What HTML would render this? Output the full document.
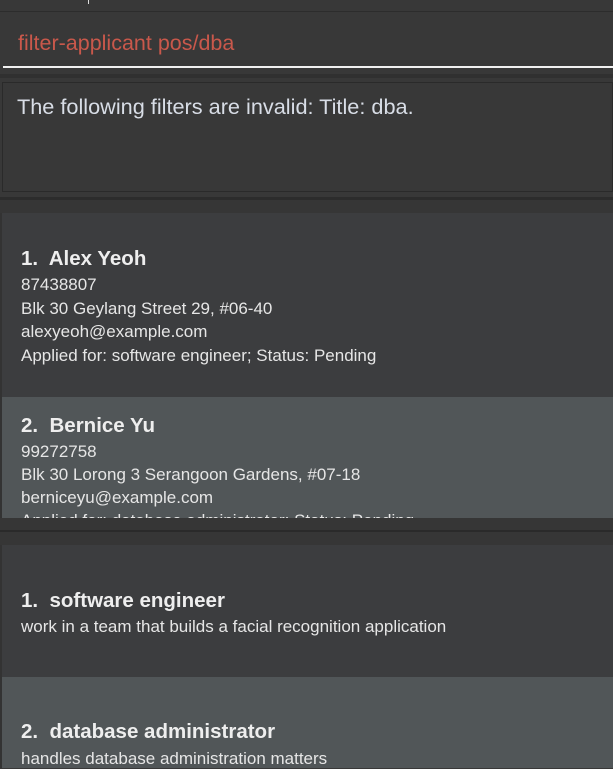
<!DOCTYPE html>
<html><head><style>
body{margin:0;width:613px;height:768px;overflow:hidden;background:#383838;font-family:"Liberation Sans",sans-serif;position:relative}
.a{position:absolute;left:0;width:613px}
.t{position:absolute;white-space:nowrap}
.n{font-size:20.5px;font-weight:bold;color:#eeeeee}
.d{font-size:17px;color:#e6e6e6}
</style></head><body>
<div class="a" style="top:0;height:11px;background:#383838"></div>
<div class="t" style="left:88px;top:0;width:1px;height:4px;background:#ddd"></div>
<div class="a" style="top:11px;height:1px;background:#2c2c2c"></div>
<div class="a" style="top:12px;height:62px;background:#383838"></div>
<div class="t" style="left:18px;top:31px;font-size:21.5px;color:#c9584b">filter-applicant pos/dba</div>
<div class="t" style="left:3px;top:66px;width:610px;height:2px;background:#f0f0f0"></div>
<div class="a" style="top:74px;height:4px;background:#303030"></div>
<div class="t" style="left:2px;top:82px;width:611px;height:110px;background:#383838;border:1px solid #2a2a2a;box-sizing:border-box"></div>
<div class="t" style="left:17px;top:94px;font-size:21.7px;color:#d8dde6">The following filters are invalid: Title: dba.</div>
<div class="a" style="top:197px;height:3px;background:#2c2c2c"></div>
<div class="a" style="top:200px;height:13px;background:#363636"></div>
<div class="a" style="top:213px;height:184px;background:#3c3d3f"></div>
<div class="a" style="top:213px;width:2px;height:305px;background:#333"></div>
<div class="t n" style="left:21px;top:247px">1.&nbsp; Alex Yeoh</div>
<div class="t d" style="left:21px;top:275px">87438807</div>
<div class="t d" style="left:21px;top:299px">Blk 30 Geylang Street 29, #06-40</div>
<div class="t d" style="left:21px;top:322px">alexyeoh@example.com</div>
<div class="t d" style="left:21px;top:346px">Applied for: software engineer; Status: Pending</div>
<div class="t" style="left:2px;top:397px;width:611px;height:121px;background:#515658;overflow:hidden">
<div class="t n" style="left:19px;top:17px">2.&nbsp; Bernice Yu</div>
<div class="t d" style="left:19px;top:45px">99272758</div>
<div class="t d" style="left:19px;top:68px">Blk 30 Lorong 3 Serangoon Gardens, #07-18</div>
<div class="t d" style="left:19px;top:91px">berniceyu@example.com</div>
<div class="t d" style="left:19px;top:114px">Applied for: database administrator; Status: Pending</div>
</div>
<div class="a" style="top:518px;height:12px;background:#363636"></div>
<div class="a" style="top:530px;height:2px;background:#2a2a2a"></div>
<div class="a" style="top:532px;height:13px;background:#363636"></div>
<div class="a" style="top:545px;height:132px;background:#3c3d3f"></div>
<div class="a" style="top:545px;width:2px;height:223px;background:#333"></div>
<div class="t n" style="left:21px;top:589px">1.&nbsp; software engineer</div>
<div class="t d" style="left:21px;top:617px">work in a team that builds a facial recognition application</div>
<div class="t" style="left:2px;top:677px;width:611px;height:91px;background:#515658"></div>
<div class="t n" style="left:21px;top:720px">2.&nbsp; database administrator</div>
<div class="t d" style="left:21px;top:749px">handles database administration matters</div>
</body></html>
